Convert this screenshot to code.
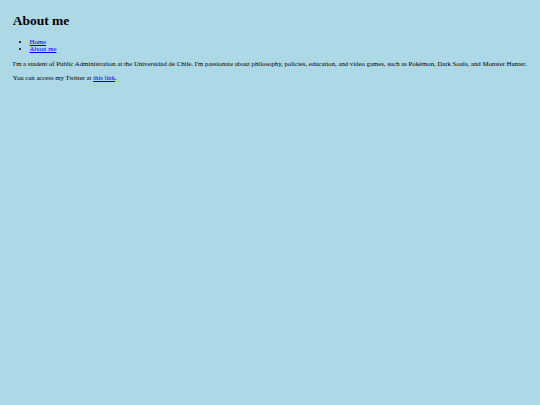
export default function App() {
  return (
    <div
      className="min-h-screen bg-[#add8e6] p-[12.7px] text-[6.75px] leading-[normal] text-black"
      style={{ fontFamily: '"Liberation Serif", "Times New Roman", serif' }}
    >
      <h1 className="mb-[9px] text-[13.5px] font-bold leading-[normal]">About me</h1>
      <ul className="mb-[8.75px] list-disc pl-[16.9px]">
        <li>
          <a href="#" className="text-[#0000ee] underline">
            Home
          </a>
        </li>
        <li>
          <a href="#" className="text-[#0000ee] underline">
            About me
          </a>
        </li>
      </ul>
      <p className="my-[6.75px]">
        I'm a student of Public Administration at the Universidad de Chile. I'm passionate about philosophy,
        policies, education, and video games, such as Pokémon, Dark Souls, and Monster Hunter.
      </p>
      <p className="my-[6.75px]">
        You can access my Twitter at{" "}
        <a href="#" className="text-[#0000ee] underline">
          this link
        </a>
        .
      </p>
    </div>
  );
}
